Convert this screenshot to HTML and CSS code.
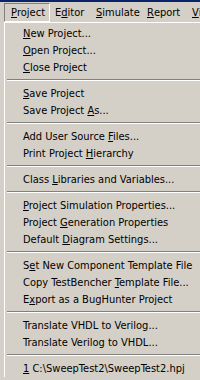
FILE: index.html
```html
<!DOCTYPE html>
<html>
<head>
<meta charset="utf-8">
<link rel="stylesheet" href="styles.css">
</head>
<body>
<div class="titlebar"></div>
<div class="menubar">
  <span class="mb-item mb-project active"><u>P</u>roject</span>
  <span class="mb-item mb-editor">E<u>d</u>itor</span>
  <span class="mb-item mb-simulate"><u>S</u>imulate</span>
  <span class="mb-item mb-report"><u>R</u>eport</span>
  <span class="mb-item mb-view"><u>V</u>iew</span>
</div>
<div class="popup">
  <div class="item"><u>N</u>ew Project...</div>
  <div class="item"><u>O</u>pen Project...</div>
  <div class="item"><u>C</u>lose Project</div>
  <div class="sep"></div>
  <div class="item"><u>S</u>ave Project</div>
  <div class="item">Save Project <u>A</u>s...</div>
  <div class="sep"></div>
  <div class="item">Add User Source <u>F</u>iles...</div>
  <div class="item">Print Project <u>H</u>ierarchy</div>
  <div class="sep"></div>
  <div class="item">Class <u>L</u>ibraries and Variables...</div>
  <div class="sep"></div>
  <div class="item"><u>P</u>roject Simulation Properties...</div>
  <div class="item">Project <u>G</u>eneration Properties</div>
  <div class="item">Default <u>D</u>iagram Settings...</div>
  <div class="sep"></div>
  <div class="item">S<u>e</u>t New Component Template File</div>
  <div class="item">Copy TestBencher <u>T</u>emplate File...</div>
  <div class="item">E<u>x</u>port as a BugHunter Project</div>
  <div class="sep"></div>
  <div class="item">Translate VHDL to Verilog...</div>
  <div class="item">Translate Verilog to VHDL...</div>
  <div class="sep"></div>
  <div class="item"><u>1</u> C:\SweepTest2\SweepTest2.hpj</div>
</div>
</body>
</html>
```
FILE: styles.css
```css
html, body {
  margin: 0;
  padding: 0;
  background: #d4d0c8;
  width: 200px;
  height: 380px;
  overflow: hidden;
}
body {
  font-family: "DejaVu Sans Condensed", "DejaVu Sans", sans-serif;
  font-size: 11px;
  color: #000;
}
u {
  text-decoration: underline;
  text-underline-offset: 1px;
}
.titlebar {
  height: 2px;
  background: #0a246a;
}
.menubar {
  height: 20px;
  display: flex;
  align-items: stretch;
  padding-left: 4px;
  white-space: nowrap;
  overflow: hidden;
}
.mb-item {
  flex: 0 0 auto;
  display: flex;
  align-items: center;
  box-sizing: border-box;
  padding: 0 0 1px 4px;
  border: 1px solid transparent;
  margin-top: 1px;
}
.mb-item.active {
  border-color: #808080 #ffffff #ffffff #808080;
}
.mb-project { width: 46px; padding-left: 6px; }
.mb-editor { width: 41px; }
.mb-simulate { width: 51px; }
.mb-report { width: 45px; }
.mb-view { width: 40px; }
.popup {
  margin-left: 4px;
  width: 230px;
  border-top: 1px solid #ffffff;
  border-left: 1px solid #ffffff;
  padding: 2px 0 0 2px;
  white-space: nowrap;
}
.item {
  height: 17px;
  line-height: 17px;
  padding-left: 16px;
}
.sep {
  height: 9px;
  box-sizing: border-box;
  padding-top: 3px;
}
.sep::before {
  content: "";
  display: block;
  height: 1px;
  background: #808080;
  border-bottom: 1px solid #ffffff;
}
```
